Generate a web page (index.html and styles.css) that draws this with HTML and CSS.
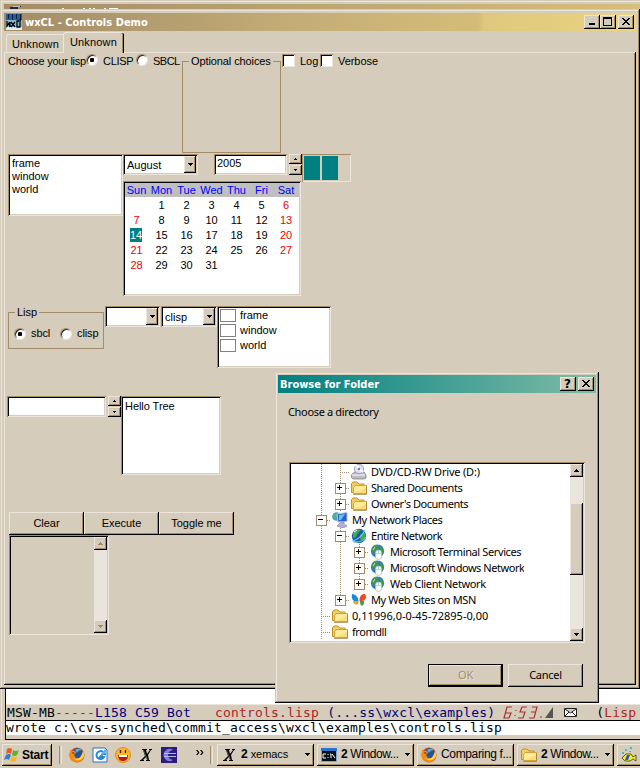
FILE: index.html
```html
<!DOCTYPE html>
<html lang="en">
<head>
<meta charset="utf-8">
<title>wxCL - Controls Demo</title>
<link rel="stylesheet" href="styles.css">
</head>
<body>
<svg class="defs" width="0" height="0" aria-hidden="true">
  <symbol id="up" viewBox="0 0 5 3"><path d="M2 0h1v1h1v1h1v1H0V2h1V1h1z"/></symbol>
  <symbol id="sdown" viewBox="0 0 5 3"><path d="M0 0h5v1H4v1H3v1H2V2H1V1H0z"/></symbol>
  <symbol id="close" viewBox="0 0 8 7"><path d="M0 0h2v1h1v1h2V1h1V0h2v1H7v1H6v1H5v1h1v1h1v1h1v1H6V6H5V5H3v1H2v1H0V6h1V5h1V4h1V3H2V2H1V1H0z"/></symbol>
  <symbol id="folder" viewBox="0 0 16 16">
    <path d="M.5 12.500V3.500L2 2h4l2 2h5v8.500z" fill="#f3cf63" stroke="#c49229"/>
    <path d="M2.500 13.500V7.500l1.500-2h11.500v8z" fill="#ffec9a" stroke="#d5a237"/>
    <path d="M4 13h11V8z" fill="#fbdd78"/><path d="M2 14.500h13.500v-8" fill="none" stroke="#9c7835" stroke-width=".7"/>
  </symbol>
  <symbol id="globe" viewBox="0 0 16 16">
    <circle cx="7.500" cy="7" r="6.600" fill="#2d79cf"/><path d="M2 4l4-3 3 1-1 3-3 2-1 3-2-2zM10 3l2 0 2 4-2 4-3-3 1-3z" fill="#3f9a49"/>
    <path d="M3 6l2-3" stroke="#a8e7ee"/><path d="M5.500 9q0-3 3-3t3 3v4q0 2.500-3 2.500t-3-2.500z" fill="#fff" stroke="#b5b5b5" stroke-width=".7"/><path d="M8.500 6v3M6 9.500h5" stroke="#aaa" stroke-width=".6"/>
  </symbol>
  <symbol id="fox" viewBox="0 0 16 16">
    <circle cx="8" cy="8" r="7.600" fill="#d65b14"/><circle cx="8.700" cy="6.500" r="5.400" fill="#24539e"/>
    <path d="M6 3q4-3 7 0-4 0-5 3z" fill="#5cb1d9"/>
    <path d="M1 3l2 1 3 0 1 2-2 2 2 3 4 0 3-4 0-3q3 6-2 10-6 3-10-1Q0 10 1 3z" fill="#ef8b19"/><path d="M14 4q3 6-3 9-4 1-7-2 7 4 10-7z" fill="#ffd34d"/><path d="M3 5l3 1-2 1z" fill="#6c2c0d"/>
  </symbol>
  <symbol id="xem" viewBox="0 0 16 16"><path d="M4 2h5v1H8l1 4 3-4h-1V2h3v1h-1l-3 5 1 5h1v1H8v-1h1l-1-3-3 3h1v1H2v-1h1l4-4-2-6H4z" fill="#000"/><path d="M5.500 3l4 10" stroke="#888" stroke-width=".6"/></symbol>
</svg>

<section class="back-window"><div class="back-title"><svg width="120" height="6" viewBox="0 0 120 6"><path d="M6 3h5v-1h6v1h-3v3H6z" fill="#222b3c"/><path d="M9 2h7v1H9z" fill="#c9c4ba"/><path d="M58 4h2v1h-2zM79 4h2v1h-2zM85 4h2v1h-2zM89 4h2v1h-2zM100 4h2v1h-2zM105 4h9v1h-9z" fill="#fff"/></svg></div></section>

<section class="editor">
  <div class="buffer"></div>
  <div class="modeline"><pre>MSW-MB<i>-----</i><b>L158 C59 Bot</b>   <i>controls.lisp</i> <b>(...ss\wxcl\examples)</b></pre>
    <svg class="clock" width="53" height="15" viewBox="0 0 53 15"><g fill="none" stroke="#a93231" stroke-width="1.200"><path d="M9 2H4L1 13h5l2-5H3M13 5v1M12 10v1M24 2h-5l-2 5h5l-2 6h-5M29 2h5l-3 11h-5M28 7h5M37 12h2"/></g><path d="M42 13L50 2v11z" fill="#555"/></svg>
    <svg class="mail" width="13" height="9" viewBox="0 0 13 9"><path d="M.5.5h12v8H.5zM1 1l5.500 4L12 1M1 8l4-4M12 8L8 4" fill="#fff" stroke="#222"/></svg>
    <pre class="mode">(<i>Lisp</i></pre></div>
  <pre class="mini">wrote c:\cvs-synched\commit_access\wxcl\examples\controls.lisp</pre>
</section>

<main class="window demo">
  <header class="titlebar gold">
    <svg class="app" width="16" height="16" viewBox="0 0 16 16"><path fill="#2a5d95" d="M0 0h16v16H0z"/><path fill="#86b9d4" d="M0 6h16v10H0z"/><path d="M2.500 0v5M6.500 0v6M10.500 0v5M14.500 0v7" stroke="#0b1f3a"/><path fill="#e6edf2" d="M0 13h16v3H0z"/><path d="M1 7v5l2-3 1 4V8M5 8l4 5M9 8l-4 5M13 7h-2v6h3V5" fill="none" stroke="#000" stroke-width="1.300"/></svg>
    <span class="caption">wxCL - Controls Demo</span>
    <span class="tb"><svg width="6" height="8"><path d="M0 5h6v2H0z"/></svg></span><span class="tb"><svg width="9" height="9"><path d="M0 0h9v9H0zM1 2v6h7V2z" fill-rule="evenodd"/></svg></span><span class="tb gap"><svg width="8" height="7"><use href="#close"/></svg></span>
  </header>
  <nav class="tabs"><span class="tab">Unknown</span><span class="tab on">Unknown</span></nav>
  <div class="page">
    <div class="row r1">
      <span class="w-lab">Choose your lisp</span><span class="radio sel"></span><span class="w-clisp">CLISP</span><span class="radio"></span><span class="w-sbcl">SBCL</span>
      <fieldset class="opts"><legend>Optional choices</legend></fieldset>
      <span class="check"></span><span class="w-log">Log</span><span class="check"></span><span class="w-verb">Verbose</span>
    </div>
    <div class="row r2">
      <div class="sunk list"><div>frame</div><div>window</div><div>world</div></div>
      <div class="date">
        <div class="daterow">
          <div class="sunk combo c1"><span>August</span><i class="drop"><svg width="5" height="3"><use href="#sdown"/></svg></i></div>
          <div class="sunk field f1">2005</div>
          <div class="spin"><i><svg width="3" height="2"><path d="M1 0h1v1h1v1H0V1h1z"/></svg></i><i><svg width="3" height="2"><path d="M0 0h3v1H2v1H1V1H0z"/></svg></i></div>
        </div>
        <div class="sunk cal">
          <b>Sun</b><b>Mon</b><b>Tue</b><b>Wed</b><b>Thu</b><b>Fri</b><b>Sat</b>
          <span></span><span>1</span><span>2</span><span>3</span><span>4</span><span>5</span><em>6</em>
          <em>7</em><span>8</span><span>9</span><span>10</span><span>11</span><span>12</span><em>13</em>
          <span><mark>14</mark></span><span>15</span><span>16</span><span>17</span><span>18</span><span>19</span><em>20</em>
          <em>21</em><span>22</span><span>23</span><span>24</span><span>25</span><span>26</span><em>27</em>
          <em>28</em><span>29</span><span>30</span><span>31</span>
        </div>
      </div>
      <div class="gauge"><i></i><i></i></div>
    </div>
    <div class="row r3">
      <fieldset class="lisp"><legend>Lisp</legend><div><span class="radio sel"></span><span class="w-s">sbcl</span><span class="radio"></span><span>clisp</span></div></fieldset>
      <div class="sunk combo c2"><span></span><i class="drop"><svg width="5" height="3"><use href="#sdown"/></svg></i></div>
      <div class="sunk combo c3"><span>clisp</span><i class="drop"><svg width="5" height="3"><use href="#sdown"/></svg></i></div>
      <div class="sunk checks"><div><i></i>frame</div><div><i></i>window</div><div><i></i>world</div></div>
    </div>
    <div class="row r4">
      <div class="sunk field f2"></div>
      <div class="spin"><i><svg width="3" height="2"><path d="M1 0h1v1h1v1H0V1h1z"/></svg></i><i><svg width="3" height="2"><path d="M0 0h3v1H2v1H1V1H0z"/></svg></i></div>
      <div class="sunk hello">Hello Tree</div>
    </div>
    <div class="row r5"><span class="btn">Clear</span><span class="btn">Execute</span><span class="btn">Toggle me</span></div>
    <div class="sunk area"><div class="bar off"><i><svg width="5" height="3"><use href="#up"/></svg></i><i><svg width="5" height="3"><use href="#sdown"/></svg></i></div></div>
  </div>
</main>

<section class="window dialog">
  <header class="titlebar teal"><span class="caption">Browse for Folder</span><span class="tb q">?</span><span class="tb gap"><svg width="8" height="7"><use href="#close"/></svg></span></header>
  <p class="prompt">Choose a directory</p>
  <div class="sunk treebox">
    <ul class="tree">
      <li><s class="v"></s><s class="v h"></s><svg width="16" height="16" viewBox="0 0 16 16"><path d="M1 10l3-2h9l2 3v3l-2 1H2l-2-2z" fill="#bcbcc4" stroke="#777" stroke-width=".7"/><path d="M1 11h13" stroke="#fff"/><circle cx="8" cy="5" r="4.700" fill="#dedef5" stroke="#8587a8" stroke-width=".7"/><path d="M8 5L5 1M8 5l4 3" stroke="#fff" stroke-width="2"/><circle cx="8" cy="5" r="1.200" fill="#7774ac"/></svg><span class="t0">DVD/CD-RW Drive (D:)</span></li>
      <li><s class="v"></s><s class="v h p"></s><svg width="16" height="16"><use href="#folder"/></svg><span class="t1">Shared Documents</span></li>
      <li><s class="v"></s><s class="v h p"></s><svg width="16" height="16"><use href="#folder"/></svg><span class="t2">Owner's Documents</span></li>
      <li><s class="v h m"></s><svg width="16" height="16" viewBox="0 0 16 16"><circle cx="4.500" cy="4.500" r="4.300" fill="#4898dc"/><path d="M1 3l3-2 2 3-3 3z" fill="#58b66b"/><path d="M5 2l10-1.500v9L6 10z" fill="#2365cf" stroke="#b9c4df"/><path d="M7 3l6-1-4 6H7z" fill="#71baf4"/><path d="M8 11l4-1v2l3 2-4 2-6-2z" fill="#b5afe0" stroke="#7774a1" stroke-width=".6"/></svg><span class="t3">My Network Places</span></li>
      <li><s class="v"></s><s class="v h m"></s><svg width="16" height="16" viewBox="0 0 16 16"><circle cx="8" cy="8" r="7.200" fill="#155aac"/><path d="M2 5l4-4 4 1-3 3-2 4-3 1zM9 7l4-3 2 4-3 5-3-2z" fill="#47aa4d"/><path d="M1 13Q9 12 14 2M2 14q9 1 13-5" fill="none" stroke="#70c6ed" stroke-width="1.200"/><path d="M3 4l3-2" stroke="#fff"/></svg><span class="t4">Entire Network</span></li>
      <li><s class="v"></s><s class="v"></s><s class="v h p"></s><svg width="16" height="16"><use href="#globe"/></svg><span class="t5">Microsoft Terminal Services</span></li>
      <li><s class="v"></s><s class="v"></s><s class="v h p"></s><svg width="16" height="16"><use href="#globe"/></svg><span class="t6">Microsoft Windows Network</span></li>
      <li><s class="v"></s><s class="v"></s><s class="half h p"></s><svg width="16" height="16"><use href="#globe"/></svg><span class="t7">Web Client Network</span></li>
      <li><s class="v"></s><s class="half h p"></s><svg width="16" height="16" viewBox="0 0 16 16"><path d="M8 9Q6 2 1 2q-1 5 2 7z" fill="#168bd8"/><path d="M8 9H2q1 5 5 3z" fill="#f5a024"/><path d="M8 9q1-8 6-7 3 5-2 7z" fill="#e94b29"/><path d="M8 9h5q1 4-3 5z" fill="#3ca64b"/><path d="M7.500 6l1.500 7" stroke="#fff"/></svg><span class="t8">My Web Sites on MSN</span></li>
      <li><s class="v h"></s><svg width="16" height="16"><use href="#folder"/></svg><span class="t9">0,11996,0-0-45-72895-0,00</span></li>
      <li><s class="v h"></s><svg width="16" height="16"><use href="#folder"/></svg><span class="t10">fromdll</span></li>
    </ul>
    <div class="bar"><i><svg width="5" height="3"><use href="#up"/></svg></i><b></b><i><svg width="5" height="3"><use href="#sdown"/></svg></i></div>
  </div>
  <footer><span class="dbtn ok">OK</span><span class="dbtn">Cancel</span></footer>
</section>

<footer class="taskbar">
  <span class="task start"><svg width="16" height="16" viewBox="0 0 16 16"><path d="M3 2q3-2 5 0L7 7Q5 5 2 7z" fill="#e85a2a"/><path d="M9 3q3 2 6 0l-2 5q-2 2-5 0z" fill="#67ac35"/><path d="M2 8q3-2 5 0l-2 5q-2-2-5 0z" fill="#3b78cf"/><path d="M8 9q3 2 5 0l-1 5q-3 2-6 0z" fill="#f2bb25"/></svg><strong>Start</strong></span>
  <span class="sep s1"></span>
  <svg class="q1" width="16" height="16"><use href="#fox"/></svg>
  <svg class="q2" width="16" height="16" viewBox="0 0 16 16"><path d="M1 1h12l2 2v12H1z" fill="#fff" stroke="#2471c6"/><path d="M11 5a4 4 0 1 0 1 5H8l3-3h3" fill="none" stroke="#2588d8" stroke-width="2"/><path d="M9 7l4-5 2 2-4 4z" fill="#5bb1ec"/></svg>
  <svg class="q3" width="16" height="16" viewBox="0 0 16 16"><circle cx="8" cy="8" r="7.500" fill="#fdb52b" stroke="#e58918"/><path d="M3 8h10q0 6-5 6T3 8z" fill="#b51c12"/><path d="M4 8h8v2H4z" fill="#fff"/><path d="M5.500 3v3M10.500 3v3" stroke="#4c2400" stroke-width="1.400"/></svg>
  <svg class="q4" width="16" height="16"><use href="#xem"/></svg>
  <svg class="q5" width="16" height="16" viewBox="0 0 16 16"><path fill="#2a1c80" d="M0 0h16v16H0z"/><path d="M12 3a6 6 0 1 0 0 10q-5-1-5-5t5-5z" fill="#8381cf"/><path d="M3 6.500h12M3 9.500h12" stroke="#b9b7ea"/></svg>
  <svg class="chev" width="8" height="5" viewBox="0 0 8 5"><path d="M0 0h1.500l2 2.500-2 2.500H0l2-2.500zM4 0h1.500l2 2.500-2 2.500H4l2-2.500z"/></svg>
  <span class="sep s2"></span>
  <span class="task"><svg width="16" height="16"><use href="#xem"/></svg><span class="tt x1"><b>2</b> xemacs</span><svg class="ar" width="5" height="3"><use href="#sdown"/></svg></span>
  <span class="task"><svg width="16" height="16" viewBox="0 0 16 16"><path fill="#061018" stroke="#7fa6cf" d="M.5 2.500h15v12H.5z"/><path fill="#2b72cf" d="M0 1h16v3H0z"/><path d="M5 7H2v4h3M7 7v1M7 10v1M9 7h1v4M11 7l3 4" fill="none" stroke="#fff"/></svg><span class="tt"><b>2</b> Window...</span><svg class="ar" width="5" height="3"><use href="#sdown"/></svg></span>
  <span class="task"><svg width="16" height="16"><use href="#fox"/></svg><span class="tt x3">Comparing f...</span></span>
  <span class="task"><svg width="16" height="16"><use href="#folder"/></svg><span class="tt"><b>2</b> Window...</span><svg class="ar" width="5" height="3"><use href="#sdown"/></svg></span>
  <span class="task"><svg width="16" height="16" viewBox="0 0 16 16"><path d="M1 11l4-4h5l2 3 3-2v6l-3-2-3 2H4z" fill="#f5ed20" stroke="#222" stroke-width=".7"/><path d="M6 8l3 0-2 5H4z" fill="#2356c9"/><path d="M1 5h2v2H1zM4 2h2v2H4zM9 0h2v2H9zM8 4h2v1H8z" fill="#39bcc3"/></svg></span>
</footer>
</body>
</html>
```
FILE: styles.css
```css
:root { --face: #d5ccbb; --light: #ebe5dc; --dark: #a38c67; }
* { box-sizing: border-box; }
body { margin: 0; width: 640px; height: 768px; position: relative; overflow: hidden; background: var(--face); color: #000; font: 11px/13px "Liberation Sans", Arial, sans-serif; white-space: nowrap; }
svg { display: block; flex: none; }
.defs { position: absolute; }
i, em { font-style: normal; }
pre { margin: 0; font: 13px/15px "DejaVu Sans Mono", monospace; letter-spacing: .175px; }

.back-window { position: absolute; left: 1px; top: 1px; width: 639px; height: 740px; border-top: 1px solid var(--light); border-left: 1px solid var(--light); padding: 2px 0 0 2px; }
.back-title { height: 6px; background: linear-gradient(90deg, #a38c67, #d6bf7b); }

.editor { position: absolute; left: 5px; top: 689px; width: 635px; height: 51px; border-left: 1px solid #000; border-bottom: 1px solid #000; }
.buffer { height: 15px; background: #fff; }
.modeline { height: 17px; display: flex; align-items: flex-start; border-top: 1px solid var(--light); border-bottom: 1px solid #000; padding-left: 1px; }
.modeline i { color: #ae2424; }
.modeline b { color: #00007c; font-weight: normal; }
.clock { margin-left: 8px; }
.mail { margin: 3px 0 0 8px; }
.mode { margin-left: 19px; }
.mini { height: 14px; line-height: 13px; background: #fff; }

.window { position: absolute; background: var(--face); padding: 4px 4px 0; box-shadow: inset -1px -1px #000, inset 1px 1px var(--face), inset -2px -2px var(--dark), inset 2px 2px var(--light); }
.demo { left: 0; top: 9px; width: 640px; height: 680px; }
.titlebar { height: 18px; display: flex; align-items: center; padding-right: 2px; color: #fff; }
.gold { background: linear-gradient(90deg, #a38c67, #c7b077 51%, #d4bc77 75%, #dfc77d 76%, #ecd481); padding-left: 2px; }
.caption { flex: 1; font: bold 11px/17px "DejaVu Sans Condensed", sans-serif; }
.gold .caption { margin-left: 3px; letter-spacing: .02px; }
.tb { width: 16px; height: 14px; display: flex; align-items: center; justify-content: center; color: #000; background: var(--face); box-shadow: inset -1px -1px #000, inset 1px 1px var(--light), inset -2px -2px var(--dark); padding: 0 1px 1px 0; }
.gap { margin-left: 2px; }
.q { font: bold 12px/12px "DejaVu Sans", sans-serif; }

.tabs { display: flex; align-items: flex-end; height: 21px; padding-left: 2px; }
.tab { width: 57px; height: 18px; padding: 3px 0 0 5px; border: 1px solid var(--light); border-right: 0; border-bottom: 0; border-radius: 3px 0 0 0; letter-spacing: .15px; }
.on { width: 61px; height: 21px; margin-bottom: -1px; padding: 3px 0 0 6px; border-radius: 3px 2px 0 0; background: var(--face); box-shadow: inset -1px 0 #000, inset -2px 0 var(--dark); z-index: 1; }
.page { height: 633px; padding: 2px 0 0 3px; box-shadow: inset -1px -1px #000, inset 1px 1px var(--light), inset -2px -2px var(--dark); }

.row { display: flex; align-items: flex-start; }
.r1 { height: 100px; padding-left: 1px; }
.r1 > span:not(.radio):not(.check) { margin-top: 1px; }
.w-lab { width: 78px; letter-spacing: -.25px; }
.w-clisp { width: 33px; margin-left: 5px; letter-spacing: -.3px; }
.w-sbcl { width: 29px; margin-left: 5px; letter-spacing: -.5px; }
.w-log { width: 20px; margin-left: 5px; }
.w-verb { margin-left: 5px; letter-spacing: -.05px; }
.radio { width: 12px; height: 12px; flex: none; border-radius: 50%; background: #fff; border: 1px solid; border-color: var(--dark) var(--light) var(--light) var(--dark); box-shadow: inset 1px 1px #222; display: grid; place-items: center; }
.sel::after { content: ""; width: 4px; height: 4px; border-radius: 1px; background: #000; }
.check { width: 13px; height: 13px; background: #fff; box-shadow: inset 1px 1px var(--dark), inset -1px -1px var(--light), inset 2px 2px #000; }
fieldset { margin: 0; padding: 0; min-width: 0; border: 1px solid var(--dark); }
legend { padding: 0 2px; line-height: 13px; }
.opts { width: 99px; height: 98px; margin: 1px 1px 0 0; }
.opts legend { margin-left: 6px; letter-spacing: -.1px; }

.sunk { background: #fff; box-shadow: inset 1px 1px var(--dark), inset -1px -1px var(--light), inset 2px 2px #000, inset -2px -2px var(--face); }
.r2 { height: 152px; padding-left: 1px; }
.list { width: 115px; height: 62px; padding: 3px 4px; }
.date { width: 179px; }
.daterow { display: flex; height: 27px; }
.combo { height: 21px; display: flex; padding: 2px; justify-content: space-between; }
.combo span { padding: 3px 2px; }
.drop { width: 12px; height: 17px; display: grid; place-items: center; background: var(--face); box-shadow: inset -1px -1px #000, inset 1px 1px var(--light), inset -2px -2px var(--dark); }
.c1 { width: 75px; margin-right: 16px; }
.field { height: 21px; padding: 3px; }
.f1 { width: 73px; margin-right: 2px; }
.spin { width: 13px; height: 21px; display: flex; flex-direction: column; gap: 1px; }
.spin i { height: 10px; display: grid; place-items: center; box-shadow: inset -1px -1px #000, inset 1px 1px var(--light), inset -2px -2px var(--dark); }
.cal { width: 178px; height: 115px; padding: 2px; display: grid; grid-template-columns: repeat(6, 25px) 24px; grid-template-rows: 14px repeat(6, 15px); text-align: center; line-height: 15px; }
.cal > b { background: #bfbfbf; color: #00f; font-weight: normal; line-height: 14px; text-indent: -2px; }
.cal span, .cal em { padding: 1px 2px 0 0; }
.cal em { color: #e00; }
.cal mark { display: block; width: 12px; height: 14px; line-height: 14px; margin: 0 auto 0 5px; background: #008080; color: #fff; }
.gauge { width: 49px; height: 28px; padding: 2px; display: flex; gap: 2px; box-shadow: inset 1px 1px var(--dark), inset -1px -1px var(--light); }
.gauge i { width: 16px; height: 24px; background: #008080; }

.r3 { height: 90px; padding-left: 1px; }
.lisp { width: 96px; height: 43px; }
.lisp legend { margin-left: 6px; }
.lisp div { display: flex; align-items: center; padding: 8px 0 0 5px; }
.lisp div span:not(.radio) { margin-left: 5px; letter-spacing: -.1px; }
.lisp .w-s { width: 24px; margin-right: 5px; }
.c2 { width: 55px; margin-left: 1px; }
.c3 { width: 56px; margin-left: 1px; }
.checks { width: 114px; height: 62px; padding: 2px 3px; }
.checks div { height: 15px; display: flex; align-items: center; gap: 4px; }
.checks i { width: 16px; height: 13px; border: 1px solid #808080; }

.r4 { height: 116px; }
.f2 { width: 99px; margin-right: 2px; }
.hello { width: 100px; height: 79px; padding: 4px; letter-spacing: -.05px; }
.r5 { padding-left: 2px; }
.btn { width: 75px; height: 23px; text-align: center; line-height: 22px; box-shadow: inset -1px -1px #000, inset 1px 1px var(--light), inset -2px -2px var(--dark); letter-spacing: -.05px; }
.area { width: 100px; height: 100px; margin-left: 2px; background: var(--face); padding: 2px; display: flex; justify-content: flex-end; }
.bar { width: 13px; background: #e9e5dd; display: flex; flex-direction: column; justify-content: space-between; flex: none; }
.bar i { height: 13px; display: grid; place-items: center; background: var(--face); box-shadow: inset -1px -1px #000, inset 1px 1px var(--light), inset -2px -2px var(--dark); }
.off svg { fill: var(--dark); }

.dialog { left: 275px; top: 372px; width: 324px; height: 331px; padding: 3px 3px 0; font: 11px/16px "Noto Sans", Tahoma, sans-serif; }
.teal { background: linear-gradient(90deg, #008080, #7fbba6); padding-left: 2px; }
.prompt { margin: 10px 0 0 10px; height: 59px; line-height: 17px; letter-spacing: -.34px; }
.treebox { width: 296px; height: 181px; margin-left: 11px; padding: 2px; display: flex; justify-content: space-between; }
.tree { list-style: none; margin: 0; padding: 0; height: 177px; overflow: hidden; }
.tree li { display: flex; height: 16px; padding-left: 21px; align-items: center; }
.tree li > svg { margin: 0 4px 0 1px; }
.tree li > span { margin-top: -1px; letter-spacing: -.45px; }
.tree li > .t0 { letter-spacing: -.2px; }
.tree li > .t5, .tree li > .t7, .tree li > .t8 { letter-spacing: -.38px; }
.tree li > .t9 { letter-spacing: 0; }
.tree s { width: 19px; height: 16px; display: grid; place-items: center; background: repeating-linear-gradient(#a38c67 0 1px, transparent 1px 2px) 9px 0/1px 16px no-repeat; text-decoration: none; }
.tree .h { background: repeating-linear-gradient(#a38c67 0 1px, transparent 1px 2px) 9px 0/1px 16px no-repeat, repeating-linear-gradient(90deg, #a38c67 0 1px, transparent 1px 2px) 9px 8px/10px 1px no-repeat; }
.tree .half { background-size: 1px 9px, 10px 1px; }
.tree .p, .tree .m { padding-top: 1px; }
.p::before, .m::before { content: ""; width: 9px; height: 9px; border: 1px solid var(--dark); background: linear-gradient(#000, #000) 1px 3px/5px 1px no-repeat, #fff; }
.p::before { background: linear-gradient(#000, #000) 1px 3px/5px 1px no-repeat, linear-gradient(#000, #000) 3px 1px/1px 5px no-repeat, #fff; }
.dialog .bar b { height: 73px; margin: 26px 0 53px; background: var(--face); box-shadow: inset -1px -1px #000, inset 1px 1px var(--light), inset -2px -2px var(--dark); }
.dialog footer { display: flex; gap: 5px; margin: 21px 0 0 150px; }
.dbtn { width: 75px; height: 23px; text-align: center; line-height: 21px; letter-spacing: -.25px; box-shadow: inset -1px -1px #000, inset 1px 1px var(--light), inset -2px -2px var(--dark); }
.ok { color: var(--dark); text-shadow: 1px 1px var(--light); box-shadow: inset 0 0 0 1px #000, inset -2px -2px #000, inset 2px 2px var(--light), inset -3px -3px var(--dark); }

.taskbar { position: absolute; left: 0; top: 740px; width: 640px; height: 28px; display: flex; align-items: flex-start; padding: 4px 0 0 2px; background: linear-gradient(var(--light), var(--light)) 0 1px/100% 1px no-repeat, var(--face); overflow: hidden; font: 12px/19px "Liberation Sans", sans-serif; }
.task { width: 97px; height: 22px; flex: none; margin-right: 3px; padding: 0 4px 1px; display: flex; align-items: center; box-shadow: inset -1px -1px #000, inset 1px 1px var(--light), inset -2px -2px var(--dark); }
.tt { margin-left: 4px; flex: 1; letter-spacing: -.4px; }
.tt b { font-size: 12px; }
.start { width: 50px; margin: 0; padding: 0 0 0 2px; }
.start strong { margin-left: 2px; letter-spacing: -.2px; }
.sep { width: 3px; height: 18px; margin-top: 2px; flex: none; border-left: 1px solid var(--dark); border-right: 1px solid var(--light); }
.s1 { margin-left: 7px; }
.s2 { margin: 2px 4px 0 6px; }
.q1, .q2, .q3, .q4, .q5 { margin-top: 3px; }
.q1 { margin-left: 7px; }
.q2, .q3, .q4, .q5 { margin-left: 7px; }
.chev { margin: 6px 0 0 19px; }
.x1 { font-size: 11px; letter-spacing: -.05px; }
.x3 { letter-spacing: -.35px; }
```
